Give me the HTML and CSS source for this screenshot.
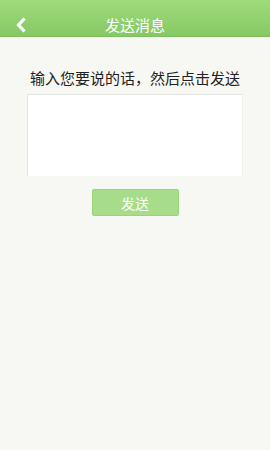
FILE: index.html
```html
<!DOCTYPE html>
<html lang="zh">
<head>
<meta charset="utf-8">
<link rel="stylesheet" href="styles.css">
</head>
<body>
<div class="app">
  <header class="topbar">
    <span class="back">
      <svg width="12" height="16" viewBox="0 0 12 16"><path d="M9.5 1.5 L3.5 8 L9.5 14.5" fill="none" stroke="#fff" stroke-width="3.2" stroke-linejoin="miter"/></svg>
    </span>
    <h1 class="title">发送消息</h1>
  </header>
  <main class="content">
    <p class="prompt">输入您要说的话，然后点击发送</p>
    <textarea class="msg"></textarea>
    <button class="send">发送</button>
  </main>
</div>
</body>
</html>
```
FILE: styles.css
```css
html, body {
  margin: 0;
  padding: 0;
  background: #f7f7f4;
  font-family: "Noto Sans CJK SC", "Noto Sans", sans-serif;
}
.app {
  width: 270px;
  height: 450px;
  display: flex;
  flex-direction: column;
}
.topbar {
  height: 37px;
  background: linear-gradient(#9edb7c, #86c964);
  border-bottom: 1px solid #7fbf5f;
  box-sizing: border-box;
  display: flex;
  align-items: center;
  justify-content: center;
  position: relative;
}
.back {
  position: absolute;
  left: 15px;
  top: 17px;
  width: 12px;
  height: 16px;
  display: flex;
}
.title {
  margin: 0;
  color: #fff;
  font-size: 15px;
  font-weight: normal;
  line-height: 1;
  margin-top: 12px;
}
.content {
  display: flex;
  flex-direction: column;
  align-items: center;
}
.prompt {
  margin: 31px 0 0;
  font-size: 15px;
  line-height: 20px;
  color: #222;
}
.msg {
  margin-top: 6px;
  width: 216px;
  height: 82px;
  box-sizing: border-box;
  border: 1px solid #e4e4e0;
  border-right-color: #f0f0ec;
  border-bottom: none;
  background: #fff;
  resize: none;
  outline: none;
  padding: 4px;
}
.send {
  margin-top: 13px;
  width: 87px;
  height: 27px;
  box-sizing: border-box;
  background: #a6dc8a;
  border: 1px solid #9bd27e;
  border-radius: 2px;
  color: #fff;
  font-family: inherit;
  font-size: 14px;
  line-height: 1;
  padding: 0;
}
```
